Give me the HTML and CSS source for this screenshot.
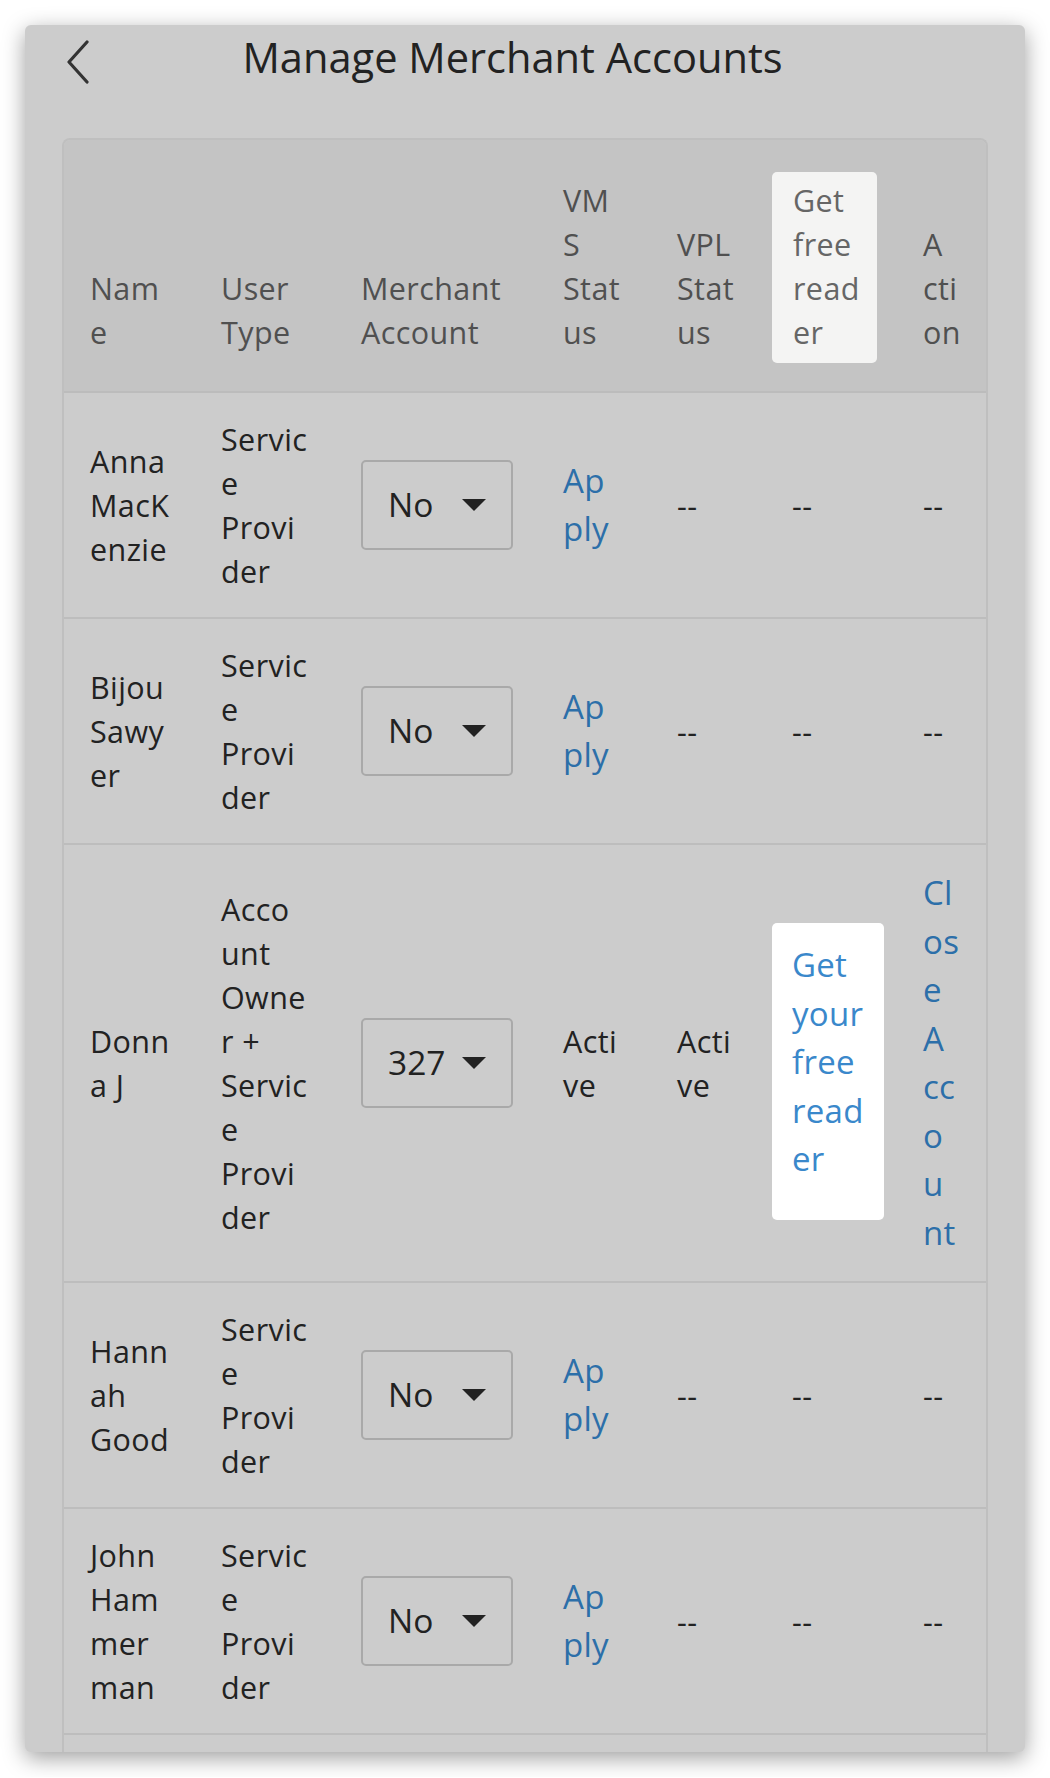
FILE: index.html
```html
<!DOCTYPE html>
<html lang="en">
<head>
  <meta charset="UTF-8" />
  <title>Manage Merchant Accounts</title>
  <link rel="stylesheet" href="styles.css">
</head>
<body>

<div class="screen">
  <header class="topbar">
    <button class="back" aria-label="Back">
      <svg width="24" height="44" viewBox="0 0 24 44"><path d="M21 2 L3 22 L21 42" /></svg>
    </button>
    <h1 class="title">Manage Merchant Accounts</h1>
    <span class="spacer"></span>
  </header>

  <div class="table-wrap">
    <table class="accounts">
      <colgroup>
        <col class="c-name" />
        <col class="c-type" />
        <col class="c-merchant" />
        <col class="c-vms" />
        <col class="c-vpl" />
        <col class="c-reader" />
        <col class="c-action" />
      </colgroup>
      <thead>
        <tr>
          <th>Nam<br>e</th>
          <th>User<br>Type</th>
          <th>Merchant<br>Account</th>
          <th>VM<br>S<br>Stat<br>us</th>
          <th>VPL<br>Stat<br>us</th>
          <th class="spot-head"><span class="spot-head-box">Get<br>free<br>read<br>er</span></th>
          <th>A<br>cti<br>on</th>
        </tr>
      </thead>
      <tbody>
        <tr>
          <td>Anna<br>MacK<br>enzie</td>
          <td>Servic<br>e<br>Provi<br>der</td>
          <td><div class="select"><span>No</span><span class="caret"></span></div></td>
          <td><a class="link" href="#">Ap<br>ply</a></td>
          <td>--</td>
          <td>--</td>
          <td>--</td>
        </tr>
        <tr>
          <td>Bijou<br>Sawy<br>er</td>
          <td>Servic<br>e<br>Provi<br>der</td>
          <td><div class="select"><span>No</span><span class="caret"></span></div></td>
          <td><a class="link" href="#">Ap<br>ply</a></td>
          <td>--</td>
          <td>--</td>
          <td>--</td>
        </tr>
        <tr>
          <td>Donn<br>a J</td>
          <td>Acco<br>unt<br>Owne<br>r +<br>Servic<br>e<br>Provi<br>der</td>
          <td><div class="select"><span>327</span><span class="caret"></span></div></td>
          <td>Acti<br>ve</td>
          <td>Acti<br>ve</td>
          <td class="spot-cell"><div class="spot"><a class="link" href="#">Get<br>your<br>free<br>read<br>er</a></div></td>
          <td><a class="link" href="#">Cl<br>os<br>e<br>A<br>cc<br>o<br>u<br>nt</a></td>
        </tr>
        <tr>
          <td>Hann<br>ah<br>Good</td>
          <td>Servic<br>e<br>Provi<br>der</td>
          <td><div class="select"><span>No</span><span class="caret"></span></div></td>
          <td><a class="link" href="#">Ap<br>ply</a></td>
          <td>--</td>
          <td>--</td>
          <td>--</td>
        </tr>
        <tr>
          <td>John<br>Ham<br>mer<br>man</td>
          <td>Servic<br>e<br>Provi<br>der</td>
          <td><div class="select"><span>No</span><span class="caret"></span></div></td>
          <td><a class="link" href="#">Ap<br>ply</a></td>
          <td>--</td>
          <td>--</td>
          <td>--</td>
        </tr>
        <tr class="more">
          <td></td><td></td><td></td><td></td><td></td><td></td><td></td>
        </tr>
      </tbody>
    </table>
  </div>
</div>

</body>
</html>
```

FILE: styles.css
```css
body { margin: 0; padding: 25px; background: #fff; font-family: "Open Sans", "Liberation Sans", sans-serif; color: #222; }

.screen { width: 1000px; height: 1727px; box-sizing: border-box; background: #cccccc; border-radius: 6px;
          box-shadow: 0 6px 22px rgba(0,0,0,0.38); overflow: hidden; }

.topbar { display: grid; grid-template-columns: 60px 1fr 85px; align-items: center; height: 64px; padding: 0 37px; }
.back { background: none; border: none; padding: 0 0 0 4px; margin: 10px 0 0; cursor: pointer; display: flex; align-items: center; }
.back svg path { fill: none; stroke: #333; stroke-width: 3.2; stroke-linecap: round; stroke-linejoin: round; }
.title { margin: 0; font-size: 41.6px; font-weight: 400; color: #222; text-align: center; white-space: nowrap; }

.table-wrap { margin: 49px 37px 0; border: 2px solid #bfbfbf; border-bottom: none; border-radius: 8px 8px 0 0; overflow: hidden; }
.accounts { width: 100%; border-collapse: collapse; table-layout: fixed; }
.c-name { width: 131px; }
.c-type { width: 140px; }
.c-merchant { width: 202px; }
.c-vms { width: 114px; }
.c-vpl { width: 115px; }
.c-reader { width: 131px; }
.c-action { width: 89px; }

.accounts th, .accounts td { font-size: 30.5px; line-height: 44px; letter-spacing: 0.4px; white-space: nowrap; text-align: left; padding: 24px 26px; }
.accounts th { background: #c4c4c4; color: #505050; font-weight: 400; vertical-align: bottom; padding: 32px 26px 37px;
               border-bottom: 2px solid #bcbcbc; }
.accounts td { vertical-align: middle; color: #222; border-top: 2px solid #bdbdbd; }
.accounts tbody tr:first-child td { border-top: none; }
.accounts tr.more td { height: 176px; }

.spot-head.spot-head { padding: 32px 20px 28px 6px; }
.spot-head-box { display: block; background: #f4f4f3; color: #666; border-radius: 5px; padding: 6px 20px 9px 21px; }

.select { display: flex; align-items: center; justify-content: space-between; box-sizing: border-box; width: 152px; height: 90px;
          border: 2px solid #a9a9a9; border-radius: 5px; padding: 0 25px; font-size: 33.5px; line-height: 1; letter-spacing: 0; color: #222; }
.caret { width: 0; height: 0; border-left: 12px solid transparent; border-right: 12px solid transparent; border-top: 12px solid #222; }

.link { display: block; font-size: 33px; line-height: 48.5px; letter-spacing: 0.3px; color: #2c6fa9; text-decoration: none; }

.spot-cell.spot-cell { padding: 41px 13px 24px 6px; }
.spot { background: #fff; border-radius: 5px; padding: 18px 20px 36px; }
.spot .link { color: #3a88cb; }
```
